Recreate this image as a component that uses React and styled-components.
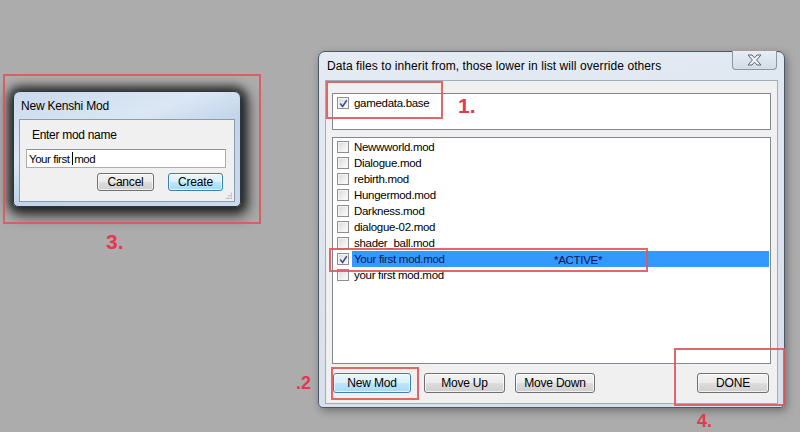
import React from "react";
import styled, { createGlobalStyle } from "styled-components";

const GlobalStyle = createGlobalStyle`
  html, body {
    margin: 0;
    padding: 0;
    background: #acacac;
  }
  body {
    font-family: "Liberation Sans", Arial, sans-serif;
    font-size: 12px;
    color: #000;
  }
`;

const Desktop = styled.div`
  position: relative;
  width: 800px;
  height: 432px;
  overflow: hidden;
  background: #acacac;
`;

/* ---------- window chrome ---------- */

const Window = styled.div`
  position: absolute;
  left: ${(p) => p.$x}px;
  top: ${(p) => p.$y}px;
  width: ${(p) => p.$w}px;
  display: flex;
  flex-direction: column;
  box-sizing: border-box;
  border: 1px solid ${(p) => (p.$dark ? "#2f3640" : "#4e5764")};
  border-radius: 7px 7px 5px 5px;
  background: ${(p) =>
    p.$dark
      ? "linear-gradient(160deg, #cad9ec 0%, #dbe7f4 35%, #c2d4ea 55%, #cbdaed 100%)"
      : "linear-gradient(170deg, #e4ebf3 0%, #dde5ef 45%, #d5dee9 100%)"};
  box-shadow: ${(p) =>
    p.$dark
      ? "0 0 8px 5px rgba(0,0,0,0.6), 3px 5px 14px 5px rgba(0,0,0,0.5)"
      : "2px 3px 8px rgba(0,0,0,0.35)"};
`;

const TitleBar = styled.div`
  position: relative;
  height: ${(p) => p.$h}px;
  display: flex;
  align-items: center;
  padding-left: ${(p) => p.$pad}px;
  font-size: 12px;
  letter-spacing: ${(p) => p.$ls || "0"};
`;

const CloseButton = styled.div`
  position: absolute;
  top: -1px;
  right: 7px;
  width: 45px;
  height: 19px;
  box-sizing: border-box;
  border: 1px solid #8c96a4;
  border-top: none;
  border-radius: 0 0 4px 4px;
  background: linear-gradient(#e9eef5, #d3dce8);
  display: flex;
  align-items: center;
  justify-content: center;
`;

const Client = styled.div`
  display: flex;
  flex-direction: column;
  margin: ${(p) => p.$margin};
  padding: ${(p) => p.$padding};
  border: 1px solid ${(p) => p.$border || "#a3adba"};
  background: #f0f0f0;
  position: relative;
`;

/* ---------- controls ---------- */

const Button = styled.button`
  box-sizing: border-box;
  width: ${(p) => p.$w}px;
  height: ${(p) => p.$h || 20}px;
  padding: 0;
  margin: 0;
  font-family: "Liberation Sans", Arial, sans-serif;
  font-size: 12px;
  letter-spacing: -0.2px;
  color: #000;
  border-radius: 3px;
  border: 1px solid ${(p) => (p.$focus ? "#3c7fb1" : "#707070")};
  background: ${(p) =>
    p.$focus
      ? "linear-gradient(#eaf6fd 0%, #d9f0fc 50%, #bee6fd 51%, #a7d9f5 100%)"
      : "linear-gradient(#f2f2f2 0%, #ebebeb 50%, #dddddd 51%, #cfcfcf 100%)"};
  box-shadow: inset 0 0 0 1px rgba(255, 255, 255, 0.7);
`;

const ListBox = styled.div`
  box-sizing: border-box;
  height: ${(p) => p.$h}px;
  margin-top: ${(p) => p.$gap || 0}px;
  border: 1px solid #828790;
  background: #fff;
  padding: 1px 1px 0 0;
  display: flex;
  flex-direction: column;
`;

const Row = styled.div`
  height: 16px;
  display: flex;
  align-items: center;
  padding-left: 4px;
  font-size: 11.5px;
  letter-spacing: -0.3px;
`;

const Box = styled.span`
  box-sizing: border-box;
  width: 12px;
  height: 12px;
  flex: none;
  border: 1px solid #8e8f8f;
  background: linear-gradient(135deg, #d8d8d8 0%, #f0f0f0 60%, #fcfcfc 100%);
  box-shadow: inset 0 0 0 1px #f4f4f4;
  display: flex;
  align-items: center;
  justify-content: center;
`;

const Label = styled.span`
  flex: 1;
  height: 16px;
  margin-left: 3px;
  padding-left: 2px;
  display: grid;
  grid-template-columns: 200px auto;
  align-items: center;
  background: ${(p) => (p.$selected ? "#3399ff" : "transparent")};
  color: ${(p) => (p.$selected ? "#0d1450" : "#000")};
`;

const Status = styled.span`
  padding-top: 2px;
`;

const ButtonRow = styled.div`
  display: flex;
  align-items: center;
  margin-top: 9px;
  padding: 0 2px 0 1px;
`;

const ButtonGroup = styled.div`
  display: flex;
  gap: ${(p) => p.$gap}px;
  margin-left: ${(p) => p.$offset || 0}px;
`;

const Spacer = styled.div`
  flex: 1;
`;

const Prompt = styled.div`
  padding: 8px 0 0 12px;
  height: 21px;
  font-size: 12px;
  letter-spacing: -0.3px;
`;

const TextBox = styled.div`
  box-sizing: border-box;
  margin-left: 6px;
  width: 200px;
  height: 19px;
  border: 1px solid #abadb3;
  border-top-color: #8e9199;
  background: #fff;
  display: flex;
  align-items: center;
  padding-left: 2px;
  font-size: 11.5px;
  letter-spacing: -0.45px;
  white-space: pre;
`;

const Caret = styled.span`
  display: inline-block;
  width: 1px;
  height: 13px;
  background: #000;
  margin: 0 1px 0 0;
`;

const DialogButtons = styled.div`
  display: flex;
  gap: 14px;
  margin: 5px 0 0 77px;
`;

const Grip = styled.div`
  position: absolute;
  right: 2px;
  bottom: 2px;
  width: 7px;
  height: 7px;
  background-image: radial-gradient(circle, #b5b9c0 0.8px, transparent 1.1px);
  background-size: 2.5px 2.5px;
  clip-path: polygon(100% 0, 100% 100%, 0 100%);
`;

/* ---------- annotations ---------- */

const Mark = styled.div`
  position: absolute;
  left: ${(p) => p.$x}px;
  top: ${(p) => p.$y}px;
  width: ${(p) => p.$w}px;
  height: ${(p) => p.$h}px;
  box-sizing: border-box;
  border: 2px solid rgba(222, 86, 92, 0.9);
  pointer-events: none;
`;

const Note = styled.div`
  position: absolute;
  left: ${(p) => p.$x}px;
  top: ${(p) => p.$y}px;
  font-family: "Liberation Sans", Arial, sans-serif;
  font-weight: bold;
  font-size: ${(p) => p.$size}px;
  line-height: 1;
  color: #e5384f;
`;

function Check({ checked }) {
  return (
    <Box>
      {checked && (
        <svg width="9" height="9" viewBox="0 0 9 9">
          <path
            d="M1.2 4.6 L3.6 7.4 L7.8 1.2"
            fill="none"
            stroke="#3b4f8c"
            strokeWidth="1.6"
          />
        </svg>
      )}
    </Box>
  );
}

function CloseGlyph() {
  return (
    <svg width="15" height="12" viewBox="0 0 15 12">
      <path
        d="M1 1 H5 L7.5 3.8 L10 1 H14 L9.6 6 L14 11 H10 L7.5 8.2 L5 11 H1 L5.4 6 Z"
        fill="#eef1f5"
        stroke="#5d6673"
        strokeWidth="1"
        strokeLinejoin="round"
      />
    </svg>
  );
}

const mods = [
  { name: "Newwworld.mod" },
  { name: "Dialogue.mod" },
  { name: "rebirth.mod" },
  { name: "Hungermod.mod" },
  { name: "Darkness.mod" },
  { name: "dialogue-02.mod" },
  { name: "shader_ball.mod" },
  { name: "Your first mod.mod", checked: true, active: true },
  { name: "your first mod.mod" },
];

function ModRow({ name, checked, active }) {
  return (
    <Row>
      <Check checked={checked} />
      <Label $selected={active}>
        <span>{name}</span>
        {active && <Status>*ACTIVE*</Status>}
      </Label>
    </Row>
  );
}

export default function App() {
  return (
    <>
      <GlobalStyle />
      <Desktop>
        <Window $x={13} $y={91} $w={228} $dark>
          <TitleBar $h={27} $pad={7} $ls="-0.2px">
            New Kenshi Mod
          </TitleBar>
          <Client $margin="0 5px 4px 5px" $padding="0 0 10px 0" $border="#8a9ab0">
            <Prompt>Enter mod name</Prompt>
            <TextBox>
              Your first <Caret />
              mod
            </TextBox>
            <DialogButtons>
              <Button $w={57} $h={18}>
                Cancel
              </Button>
              <Button $w={55} $h={18} $focus>
                Create
              </Button>
            </DialogButtons>
            <Grip />
          </Client>
        </Window>

        <Window $x={318} $y={51} $w={467}>
          <TitleBar $h={28} $pad={8} $ls="0.08px">
            Data files to inherit from, those lower in list will override others
            <CloseButton>
              <CloseGlyph />
            </CloseButton>
          </TitleBar>
          <Client $margin="0 6px 3px 6px" $padding="12px 6px 10px 6px">
            <ListBox $h={37}>
              <ModRow name="gamedata.base" checked />
            </ListBox>
            <ListBox $h={227} $gap={7}>
              {mods.map((m) => (
                <ModRow key={m.name} {...m} />
              ))}
            </ListBox>
            <ButtonRow>
              <ButtonGroup $gap={13}>
                <Button $w={78} $focus>
                  New Mod
                </Button>
              </ButtonGroup>
              <ButtonGroup $gap={10} $offset={13}>
                <Button $w={81}>Move Up</Button>
                <Button $w={80}>Move Down</Button>
              </ButtonGroup>
              <Spacer />
              <Button $w={72}>DONE</Button>
            </ButtonRow>
          </Client>
        </Window>

        <Mark $x={3} $y={74} $w={258} $h={150} />
        <Note $x={106} $y={231} $size={21}>
          3.
        </Note>

        <Mark $x={326} $y={81} $w={117} $h={38} />
        <Note $x={458} $y={95} $size={21}>
          1.
        </Note>

        <Mark $x={329} $y={248} $w={319} $h={24} />

        <Mark $x={331} $y={367} $w={88} $h={33} />
        <Note $x={296} $y={374} $size={18}>
          .2
        </Note>

        <Mark $x={674} $y={348} $w={111} $h={58} />
        <Note $x={697} $y={412} $size={18}>
          4.
        </Note>
      </Desktop>
    </>
  );
}
